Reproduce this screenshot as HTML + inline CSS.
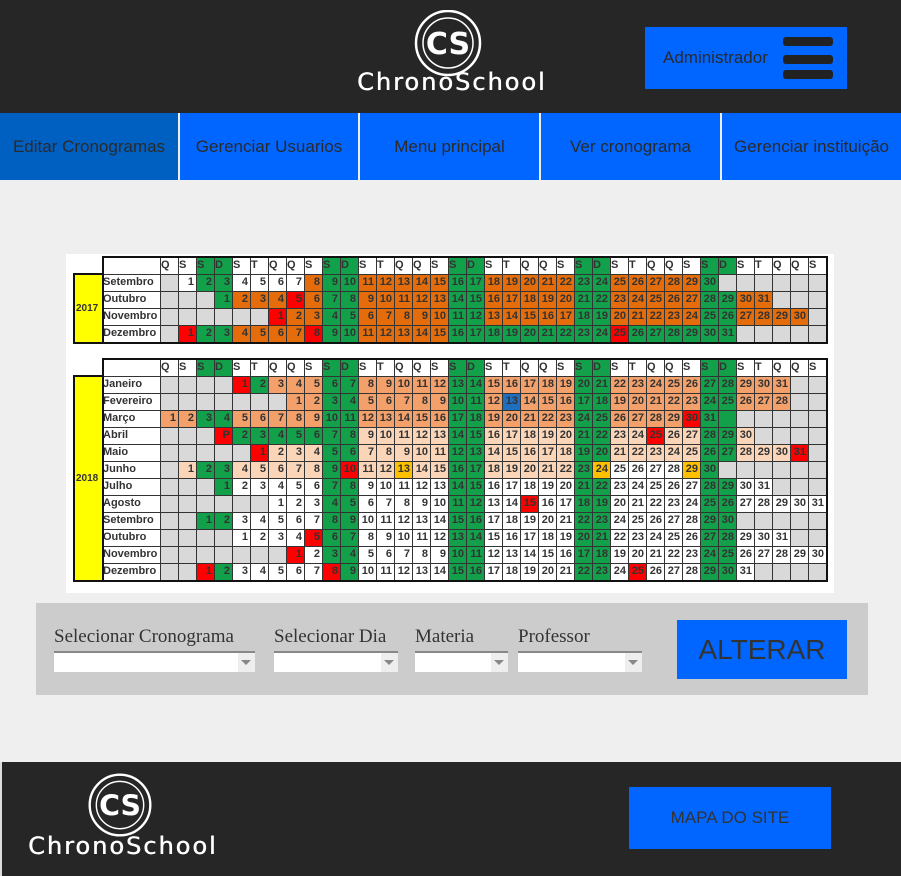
<!DOCTYPE html>
<html><head><meta charset="utf-8">
<style>
*{margin:0;padding:0;box-sizing:border-box}
body{width:901px;height:876px;background:#efefef;position:relative;overflow:hidden;font-family:"Liberation Sans",Arial,sans-serif}
.abs{position:absolute}
.hdr{left:0;top:0;width:901px;height:113px;background:#262626}
.nav{top:113px;height:67px;background:#0066ff;color:#2a2a2a;font-size:17px;display:flex;align-items:center;justify-content:center;white-space:nowrap}
.logotxt{color:#fff;font-family:"DejaVu Sans","Liberation Sans",sans-serif;letter-spacing:2px;text-shadow:0.5px 0 0 #fff}
.c{position:absolute;border:1px solid #333;font-family:"Liberation Sans",sans-serif;font-weight:bold;font-size:11px;color:#333;text-align:right;padding-right:2px;line-height:15px;overflow:hidden}
.lbl{font-family:"Liberation Serif",serif;font-size:19px;color:#333;position:absolute;top:626px}
.sel{position:absolute;top:651px;height:21px;background:#fff;border-top:2px solid #888}
.sel::after{content:"";position:absolute;right:0;top:0;width:17px;height:19px;background:#eee}
.sel i{position:absolute;right:4px;top:7px;border-left:5px solid transparent;border-right:5px solid transparent;border-top:5px solid #888;z-index:2}
.frame{position:absolute;border:2px solid #111;pointer-events:none}
</style></head><body>
<div class="abs hdr"></div>
<svg class="abs" style="left:410px;top:10px" width="76" height="68" viewBox="0 0 76 68">
<circle cx="38" cy="33" r="32" fill="none" stroke="#fff" stroke-width="2.5"/>
<circle cx="38" cy="33" r="25" fill="none" stroke="#fff" stroke-width="1.5"/>
<text x="38" y="44" text-anchor="middle" fill="#fff" font-family="DejaVu Sans" font-weight="bold" font-size="30">CS</text>
</svg>
<div class="abs logotxt" style="left:357px;top:68px;font-size:24px">ChronoSchool</div>
<div class="abs" style="left:645px;top:27px;width:202px;height:62px;background:#0066ff"></div>
<div class="abs" style="left:663px;top:48px;font-size:17px;color:#2a2a2a">Administrador</div>
<div class="abs" style="left:783px;top:37px;width:50px;height:9px;background:#222;border-radius:3px"></div>
<div class="abs" style="left:783px;top:55px;width:50px;height:9px;background:#222;border-radius:3px"></div>
<div class="abs" style="left:783px;top:70px;width:50px;height:9px;background:#222;border-radius:3px"></div>
<div class="abs nav" style="left:0;width:178px;background:#0060c2">Editar Cronogramas</div>
<div class="abs nav" style="left:180px;width:178px">Gerenciar Usuarios</div>
<div class="abs nav" style="left:360px;width:179px">Menu principal</div>
<div class="abs nav" style="left:541px;width:179px">Ver cronograma</div>
<div class="abs nav" style="left:722px;width:179px">Gerenciar instituição</div>

<div class="abs" style="left:66px;top:254px;width:768px;height:339px;background:#fff"></div>
<div id="cal"></div>

<div class="abs" style="left:36px;top:603px;width:832px;height:92px;background:#ccc"></div>
<div class="lbl" style="left:54px">Selecionar Cronograma</div>
<div class="lbl" style="left:274px">Selecionar Dia</div>
<div class="lbl" style="left:415px">Materia</div>
<div class="lbl" style="left:518px">Professor</div>
<div class="sel" style="left:54px;width:201px"><i></i></div>
<div class="sel" style="left:274px;width:124px"><i></i></div>
<div class="sel" style="left:415px;width:93px"><i></i></div>
<div class="sel" style="left:518px;width:124px"><i></i></div>
<div class="abs" style="left:677px;top:620px;width:170px;height:59px;background:#0066ff;color:#333;font-size:28px;display:flex;align-items:center;justify-content:center">ALTERAR</div>

<div class="abs" style="left:0;top:762px;width:901px;height:114px;background:#262626;border-left:2px solid #ddd"></div>
<svg class="abs" style="left:84px;top:773px" width="72" height="66" viewBox="0 0 76 68">
<circle cx="38" cy="33" r="32" fill="none" stroke="#fff" stroke-width="2.5"/>
<circle cx="38" cy="33" r="25" fill="none" stroke="#fff" stroke-width="1.5"/>
<text x="38" y="44" text-anchor="middle" fill="#fff" font-family="DejaVu Sans" font-weight="bold" font-size="30">CS</text>
</svg>
<div class="abs logotxt" style="left:28px;top:832px;font-size:24px">ChronoSchool</div>
<div class="abs" style="left:629px;top:787px;width:202px;height:62px;background:#0066ff;color:#333;font-size:17px;display:flex;align-items:center;justify-content:center">MAPA DO SITE</div>

<script>
var G='#13a04a',O='#e46c0a',LO='#f4a06a',P='#fbd5b8',W='#fff',R='#ff0000',Y='#ffc000',B='#1f6fc0',E='#d9d9d9';
var hd=[];for(var i=0;i<37;i++)hd.push('QSSDSTQ'[i%7]);
var out='';
function cell(x,y,w,h,bg,t,al,sz){out+='<div class="c" style="left:'+x+'px;top:'+y+'px;width:'+(w+1)+'px;height:'+(h+1)+'px;background:'+bg+';text-align:'+(al||'right')+(sz?';font-size:'+sz+'px':'')+'">'+t+'</div>';}
function table(top,year,months){
 var x0=160;
 cell(102,top,58,17,W,'');
 for(var i=0;i<37;i++){var wk=(i%7==2||i%7==3);cell(x0+i*18,top,18,17,wk?G:W,hd[i],'left');}
 cell(74,top+17,28,months.length*17,'#ffff00','<div style="position:absolute;top:50%;left:1px;margin-top:-8px">'+year+'</div>','left',10);
 months.forEach(function(m,r){var y=top+17+r*17;
  cell(102,y,58,17,W,m[0],'left');
  for(var i=0;i<37;i++){var d=i-m[1]+1;var wk=(i%7==2||i%7==3);var bg,t='';
   if(d<1||d>m[2]){bg=(m[4]&&m[4].indexOf(i)>=0)?G:E;}
   else{t=d;bg=wk?G:m[3](d);}
   if(m[5]&&m[5][d]&&t!=='')bg=m[5][d];
   if(m[6]&&m[6][d]&&t!=='')t=m[6][d];
   cell(x0+i*18,y,18,17,bg,t);}
 });
 var hh=17*(months.length+1)+1;
 out+='<div class="frame" style="left:102px;top:'+(top-1)+'px;width:726px;height:'+(hh+2)+'px"></div>';
 out+='<div class="frame" style="left:73px;top:'+(top+16)+'px;width:31px;height:'+(hh-15)+'px"></div>';
}
table(257,'2017',[
 ['Setembro',1,30,function(d){return d<8?W:O}],
 ['Outubro',3,31,function(){return O},0,{5:R}],
 ['Novembro',6,30,function(){return O},0,{1:R}],
 ['Dezembro',1,31,function(d){return d<16?O:G},0,{1:R,8:R,25:R}]
]);
table(359,'2018',[
 ['Janeiro',4,31,function(){return LO},0,{1:R,2:G}],
 ['Fevereiro',7,28,function(){return LO},0,{13:B}],
 ['Março',0,31,function(){return LO},[31],{30:R}],
 ['Abril',3,30,function(d){return d<9?G:P},0,{1:R,25:R},{1:'P'}],
 ['Maio',5,31,function(){return P},0,{1:R,31:R}],
 ['Junho',1,30,function(d){return d<25?P:W},[30],{10:R,13:Y,23:G,24:Y,29:Y}],
 ['Julho',3,31,function(){return W}],
 ['Agosto',6,31,function(){return W},0,{15:R}],
 ['Setembro',2,30,function(){return W}],
 ['Outubro',4,31,function(){return W},0,{5:R}],
 ['Novembro',7,30,function(){return W},0,{1:R}],
 ['Dezembro',2,31,function(){return W},0,{1:R,8:R,25:R}]
]);
document.getElementById('cal').innerHTML=out;
</script>
</body></html>
